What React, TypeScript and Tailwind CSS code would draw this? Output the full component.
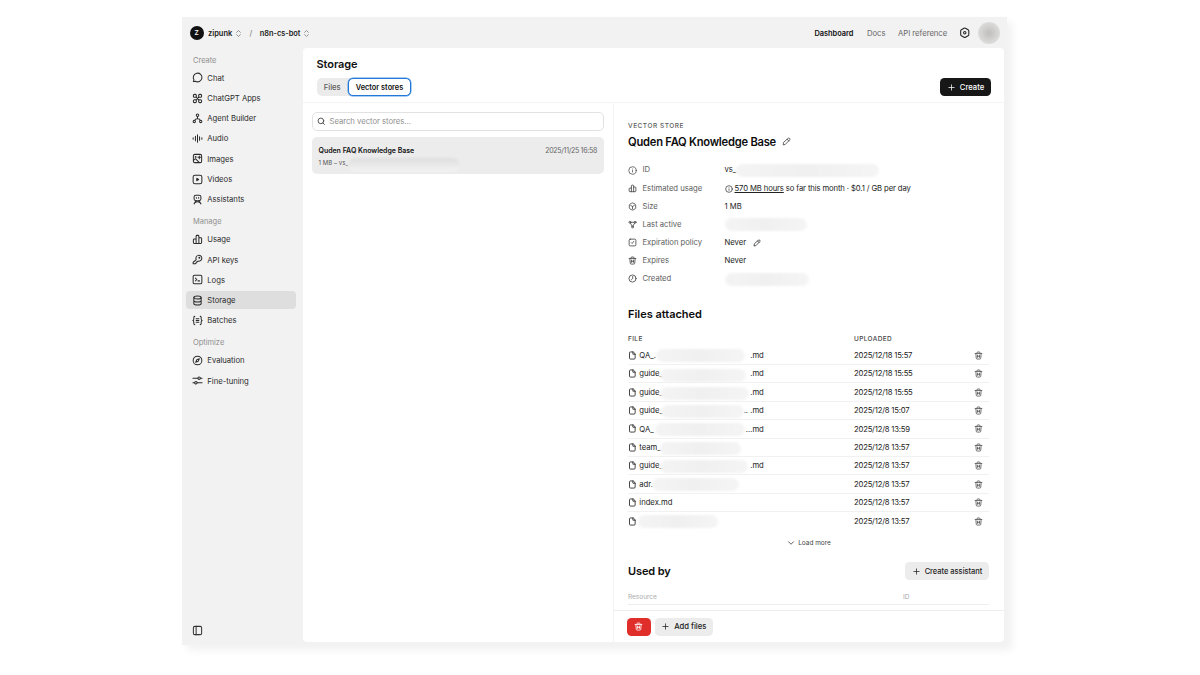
import React, { useState } from 'react';
import { ChevronDown, ChevronsUpDown, Info, Plus, Search } from 'lucide-react';

type IconName = 'chat' | 'apps' | 'agent' | 'audio' | 'images' | 'videos' | 'assistants' | 'usage' | 'key' | 'logs' | 'storage' | 'batches' | 'compass' | 'sliders' | 'sidebar' | 'gear' | 'cube' | 'nodes' | 'policy' | 'trash' | 'file' | 'pencil' | 'clock';

const ICONS: Record<IconName, React.ReactNode> = {
  chat: <path d="M3 21 4.200 17A9.500 9.500 0 1 1 7.500 20.200Z" />,
  apps: <><path d="m9 9 6 6M15 9l-6 6" /><rect x="3" y="3" width="6.5" height="6.5" rx="2.500" /><rect x="14.5" y="3" width="6.5" height="6.5" rx="2.500" /><rect x="3" y="14.5" width="6.5" height="6.5" rx="2.500" /><rect x="14.5" y="14.5" width="6.5" height="6.5" rx="2.500" /></>,
  agent: <><circle cx="12" cy="5" r="2.7" /><circle cx="5" cy="18.5" r="2.5" /><circle cx="19" cy="18.5" r="2.5" /><path d="M12 8v4.500M6 16c.5-2.500 2.500-3.500 6-3.500s5.500 1 6 3.500" /></>,
  audio: <path d="M2.500 10.500v3M7.500 7v10M12 4v16M16.500 8v8M21.500 10.500v3" />,
  images: <><rect x="3" y="3" width="18" height="18" rx="3" /><circle cx="8" cy="8.500" r="1" /><path d="m3.500 16 4-3.500 8 8M16 6.500v6M13 9.500h6" /></>,
  videos: <><rect x="2.500" y="2.500" width="19" height="19" rx="4" /><path d="M10.500 9.500v5l4-2.500Z" fill="currentColor" /></>,
  assistants: <><rect x="4.500" y="2.500" width="15" height="12" rx="4" /><path d="M9.500 7.500v1.500M14.500 7.500v1.500M9 14.500 4.500 21.500M15 14.500l4.500 7M7 18.500c3-2 7-2 10 0" /></>,
  usage: <path d="M9 20.500V5a2 2 0 0 1 2-2h2a2 2 0 0 1 2 2v15.500M9 11H5a2 2 0 0 0-2 2v5.500a2 2 0 0 0 2 2h14a2 2 0 0 0 2-2V10a2 2 0 0 0-2-2h-4" />,
  key: <><path d="M9.300 12.500A6.500 6.500 0 1 1 13 15.500L11 17.500H9V20l-1.500 1.500h-5V18Z" /><circle cx="16" cy="8" r="1" /></>,
  logs: <><rect x="2.500" y="2.500" width="19" height="19" rx="3" /><path d="m7.500 9 3 3-3 3M13 15h3.500" /></>,
  storage: <><ellipse cx="12" cy="5.500" rx="8" ry="3.300" /><path d="M4 5.500v13c0 1.900 3.600 3.500 8 3.500s8-1.600 8-3.500v-13M4 12c0 1.900 3.600 3.500 8 3.500s8-1.600 8-3.500" /></>,
  batches: <path d="M6 3C3.500 3 4 5 4 8s-.5 3.500-2 4c1.500.5 2 1 2 4s-.5 5 2 5M18 3c2.500 0 2 2 2 5s.5 3.500 2 4c-1.500.5-2 1-2 4s.5 5-2 5M9 8h6M9 12h6M9 16h6" />,
  compass: <><circle cx="12" cy="12" r="9.500" /><path d="m16 8-2.500 5.500L8 16l2.500-5.500Z" /></>,
  sliders: <><circle cx="15.500" cy="7" r="2.700" /><circle cx="8.500" cy="17" r="2.700" /><path d="M2 7h10.800M18.200 7H22M2 17h3.800M11.200 17H22" /></>,
  sidebar: <><rect x="3" y="3" width="18" height="18" rx="3" /><path d="M9 3v18" /></>,
  gear: <><path d="M10.500 2.500a3 3 0 0 1 3 0l5.500 3.200a3 3 0 0 1 1.500 2.600v7.400a3 3 0 0 1-1.500 2.600l-5.500 3.200a3 3 0 0 1-3 0L5 18.300a3 3 0 0 1-1.500-2.600V8.300A3 3 0 0 1 5 5.700Z" /><circle cx="12" cy="12" r="2.500" /></>,
  cube: <path d="M10.500 2.800a3 3 0 0 1 3 0l5.500 3a3 3 0 0 1 1.500 2.600v7.200a3 3 0 0 1-1.500 2.600l-5.500 3a3 3 0 0 1-3 0l-5.500-3a3 3 0 0 1-1.500-2.600V8.400A3 3 0 0 1 5 5.800ZM7 9l5 3 5-3M12 12v6" />,
  nodes: <><circle cx="5" cy="6" r="2.500" /><circle cx="19" cy="6" r="2.500" /><circle cx="12" cy="18.500" r="2.500" /><path d="M7.500 6h9M6.500 8.500l4.200 7.500M17.500 8.500 13.300 16" /></>,
  policy: <><rect x="3" y="3" width="18" height="18" rx="3" /><path d="m9 12.500 2 2L15.500 9" /></>,
  trash: <path d="M3 6.500h18M8 6V5a2.500 2.500 0 0 1 2.500-2.500h3A2.500 2.500 0 0 1 16 5v1M5 7l1 12a2.500 2.500 0 0 0 2.500 2.500h7A2.500 2.500 0 0 0 18 19l1-12M9.500 11v6M14.500 11v6M9.500 14h5" />,
  file: <path d="M13 2.500H6.500A2.500 2.500 0 0 0 4 5v14a2.500 2.500 0 0 0 2.500 2.500h10A2.500 2.500 0 0 0 19 19V8.500ZM13 2.500v6h6" />,
  pencil: <path d="m4 15.500-1 5.500 5.500-1L20.300 8.200a3 3 0 0 0-4.500-4.500ZM13.500 6l4.500 4.500" />,
  clock: <><circle cx="12" cy="12" r="9.500" /><path d="M12.500 6.500V12L9 15.500" /></>,
};

const Icon: React.FC<{ name: IconName; className?: string }> = ({ name, className = 'size-[10px]' }) => (
  <svg viewBox="0 0 24 24" fill="none" stroke="currentColor" strokeWidth="2.2" strokeLinecap="round" strokeLinejoin="round" className={`shrink-0 ${className}`}>
    {ICONS[name]}
  </svg>
);

const NAV: { title: string; items: { label: string; icon: IconName }[] }[] = [
  {
    title: 'Create',
    items: [
      { label: 'Chat', icon: 'chat' },
      { label: 'ChatGPT Apps', icon: 'apps' },
      { label: 'Agent Builder', icon: 'agent' },
      { label: 'Audio', icon: 'audio' },
      { label: 'Images', icon: 'images' },
      { label: 'Videos', icon: 'videos' },
      { label: 'Assistants', icon: 'assistants' },
    ],
  },
  {
    title: 'Manage',
    items: [
      { label: 'Usage', icon: 'usage' },
      { label: 'API keys', icon: 'key' },
      { label: 'Logs', icon: 'logs' },
      { label: 'Storage', icon: 'storage' },
      { label: 'Batches', icon: 'batches' },
    ],
  },
  {
    title: 'Optimize',
    items: [
      { label: 'Evaluation', icon: 'compass' },
      { label: 'Fine-tuning', icon: 'sliders' },
    ],
  },
];

// blur = class list of the redaction smudge that covers part of the name
const FILES = [
  { name: 'QA_.', blur: 'left-[28px] top-[2px] w-[89px]', end: '.md', date: '2025/12/18 15:57' },
  { name: 'guide_', blur: 'left-[32px] top-[4px] w-[86px]', end: '.md', date: '2025/12/18 15:55' },
  { name: 'guide_', blur: 'left-[32px] top-[4px] w-[89px]', end: '.md', date: '2025/12/18 15:55' },
  { name: 'guide_', blur: 'left-[33px] top-[3px] w-[83px]', end: '.. .md', date: '2025/12/8 15:07' },
  { name: 'QA_', blur: 'left-[27px] top-[3px] w-[90px]', end: '...md', date: '2025/12/8 13:59' },
  { name: 'team_', blur: 'left-[32px] top-[3px] w-[81px]', end: '', date: '2025/12/8 13:57' },
  { name: 'guide_', blur: 'left-[32px] top-[3px] w-[88px]', end: '.md', date: '2025/12/8 13:57' },
  { name: 'adr.', blur: 'left-[24px] top-[3px] w-[87px]', end: '', date: '2025/12/8 13:57' },
  { name: 'index.md', blur: '', end: '', date: '2025/12/8 13:57' },
  { name: '', blur: 'left-[10px] top-[3px] w-[80px]', end: '', date: '2025/12/8 13:57' },
];

const Smudge: React.FC<{ className: string }> = ({ className }) => (
  <span className={`rounded-full bg-gradient-to-r from-[#f4f4f4] via-[#f0f0f0] to-[#f5f5f5] blur-[1px] ${className}`} />
);

const Row: React.FC<{ icon: React.ReactNode; label: string; children: React.ReactNode }> = ({ icon, label, children }) => (
  <div className="flex h-[18.1px] items-center">
    <span className="flex w-[14.500px] text-[#444]">{icon}</span>
    <span className="w-[82px] whitespace-nowrap pt-[0.8px] text-[#5d5d5d]">{label}</span>
    <div className="flex items-center pt-[0.8px] text-[#222]">{children}</div>
  </div>
);

export default function App() {
  const [activeNav, setActiveNav] = useState('Storage');

  return (
    <div className="h-[675px] w-[1200px] overflow-hidden bg-white pl-[181.5px] pt-[17px] font-['Inter',sans-serif] text-[7.7px] leading-[10px] tracking-[-0.02px] text-[#222]">
      <div className="flex h-[628px] w-[825.5px] flex-col bg-[#f2f2f2] shadow-[5px_5px_8px_rgba(0,0,0,0.06)]">
        <header className="flex h-[31px] shrink-0 items-center pl-[8px] pr-[7px] pt-px">
          <span className="flex size-[14px] items-center justify-center rounded-full bg-[#111] text-[6.5px] font-semibold text-white">Z</span>
          <span className="ml-[4.500px] w-[24px] pt-px text-[7.500px] font-semibold">zipunk</span>
          <ChevronsUpDown className="ml-[2px] size-[9px] text-[#777]" />
          <span className="ml-[6.500px] pt-px text-[#777]">/</span>
          <span className="ml-[7.500px] w-[41px] whitespace-nowrap pt-px text-[7.400px] font-semibold">n8n-cs-bot</span>
          <ChevronsUpDown className="ml-[1.500px] size-[9px] text-[#777]" />
          <nav className="ml-auto flex items-center text-[#666]">
            <span className="w-[52.500px] pt-px text-[7.400px] font-semibold text-[#111]">Dashboard</span>
            <span className="w-[31px] pt-px">Docs</span>
            <span className="w-[60.500px] whitespace-nowrap pt-px">API reference</span>
            <Icon name="gear" className="size-[11.500px] text-[#222]" />
            <span className="ml-[8px] size-[22px] rounded-full bg-[radial-gradient(circle,#c4c2c0_10%,#dcdcdb_70%)] blur-[0.5px]" />
          </nav>
        </header>

        <div className="flex min-h-0 flex-1">
          <aside className="flex w-[121.5px] shrink-0 flex-col">
            {NAV.map((group) => (
              <div key={group.title}>
                <div className="flex h-[19.8px] items-center pl-[11.500px] pt-[5.500px] text-[7.500px] text-[#8f8f8f]">{group.title}</div>
                {group.items.map((item) => (
                  <div key={item.label} className="flex h-[20.25px] items-center pl-[4.500px]">
                    <button
                      onClick={() => setActiveNav(item.label)}
                      className={`flex h-[18px] w-[109.500px] items-center gap-[4.500px] rounded-[4px] pl-[5.800px] text-[#2b2b2b] ${activeNav === item.label ? 'bg-[#dedede]' : ''}`}
                    >
                      <Icon name={item.icon} className="size-[11px]" />
                      <span className="pt-[1.600px]">{item.label}</span>
                    </button>
                  </div>
                ))}
              </div>
            ))}
            <Icon name="sidebar" className="mb-[9.500px] ml-[10px] mt-auto size-[11px] text-[#333]" />
          </aside>

          <main className="mb-[3px] flex w-[701px] flex-col overflow-hidden rounded-[4px] bg-white">
            <div className="h-[55px] shrink-0 border-b border-[#f4f4f4] pl-[13.500px] pr-[13px] pt-[10px]">
              <h1 className="text-[11px] font-semibold leading-[13px] tracking-[-0.080px] text-[#111]">Storage</h1>
              <div className="mt-[7px] flex h-[18px] items-center justify-between">
                <div className="flex h-full w-[94.500px] items-center rounded-[5px] bg-[#ebebeb]">
                  <span className="w-[31.500px] pt-px text-center font-medium text-[#5d5d5d]">Files</span>
                  <span className="flex h-[18px] w-[63px] items-center justify-center whitespace-nowrap rounded-[5px] border border-[#2478d8] bg-white pt-px text-[7.400px] font-semibold text-[#111] shadow-[0_0_0_0.5px_#5a9ce6]">Vector stores</span>
                </div>
                <button className="flex h-full w-[51px] items-center justify-center gap-[4px] rounded-[4.500px] bg-[#171717] font-medium text-white">
                  <Plus className="size-[9px]" /><span className="pt-px">Create</span>
                </button>
              </div>
            </div>

            <div className="flex min-h-0 flex-1">
              <section className="w-[310.500px] shrink-0 border-r border-[#f4f4f4] px-[8.500px] pt-[9px]">
                <div className="flex h-[18.500px] items-center gap-[4px] rounded-[5px] border border-[#e2e2e2] pl-[4.500px] text-[#8f8f8f]">
                  <Search className="size-[8.500px] text-[#444]" strokeWidth={2.500} /><span className="pt-px">Search vector stores...</span>
                </div>
                <div className="relative mt-[6.500px] flex h-[36.500px] flex-col rounded-[5px] bg-[#ececec] px-[7px] pt-[9px]">
                  <div className="flex justify-between">
                    <span className="text-[7px] font-semibold text-[#111]">Quden FAQ Knowledge Base</span>
                    <span className="text-[7px] tracking-[-0.280px] text-[#666]">2025/11/25 16:58</span>
                  </div>
                  <span className="mt-[2px] text-[6px] tracking-[0.060px] text-[#555]">1 MB – vs_</span>
                  <span className="absolute left-[36px] top-[21px] h-[14px] w-[112px] rounded-full bg-gradient-to-b from-[#dedede] to-[#f3f3f3] blur-[1px]" />
                </div>
              </section>

              <section className="flex min-w-0 flex-1 flex-col">
                <div className="min-h-0 flex-1 overflow-hidden pl-[14.500px] pr-[15px]">
                  <div className="mt-[19px] text-[6.500px] font-medium leading-[8px] tracking-[0.520px] text-[#5d5d5d]">VECTOR STORE</div>
                  <div className="mt-[4.500px] flex h-[14px] items-center gap-[6px] whitespace-nowrap text-[11.200px] font-semibold tracking-[-0.240px] text-[#0d0d0d]">
                    <span>Quden FAQ Knowledge Base</span>
                    <Icon name="pencil" className="size-[9px] text-[#444]" />
                  </div>
                  <div className="mt-[12.500px]">
                    <Row icon={<Info className="size-[9px]" />} label="ID">vs_<Smudge className="h-[13px] w-[143px]" /></Row>
                    <Row icon={<Icon name="usage" className="size-[9px]" />} label="Estimated usage">
                      <Info className="mr-[2px] size-[8px]" /><span className="whitespace-nowrap tracking-[-0.120px]"><span className="underline underline-offset-1">570 MB hours</span> so far this month · $0.1 / GB per day</span>
                    </Row>
                    <Row icon={<Icon name="cube" className="size-[9px]" />} label="Size">1 MB</Row>
                    <Row icon={<Icon name="nodes" className="size-[9px]" />} label="Last active"><Smudge className="h-[13px] w-[82px]" /></Row>
                    <Row icon={<Icon name="policy" className="size-[9px]" />} label="Expiration policy"><span className="w-[28px]">Never</span><Icon name="pencil" className="size-[8px]" /></Row>
                    <Row icon={<Icon name="trash" className="size-[9px]" />} label="Expires">Never</Row>
                    <Row icon={<Icon name="clock" className="size-[9px]" />} label="Created"><Smudge className="h-[13px] w-[84px]" /></Row>
                  </div>

                  <h2 className="mt-[20px] text-[11px] font-semibold leading-[13px] text-[#0d0d0d]">Files attached</h2>
                  <div className="mt-[14px] flex h-[8px] items-center text-[6.500px] font-medium tracking-[0.380px] text-[#444]">
                    <span className="w-[226px]">FILE</span><span>UPLOADED</span>
                  </div>
                  <div className="mt-[4px]">
                    {FILES.map((file, i) => (
                      <div key={i} className={`relative flex h-[18.400px] items-center ${i < FILES.length - 1 ? 'border-b border-[#f1f1f1]' : ''}`}>
                        <Icon name="file" className="mr-[2.300px] size-[9px]" />
                        <span className="w-[60px] pt-[1.200px]">{file.name}</span>
                        <span className="w-[64.500px] pt-[1.200px] text-right">{file.end}</span>
                        {file.blur && <Smudge className={`absolute h-[13px] ${file.blur}`} />}
                        <span className="ml-[90.200px] pt-[1.200px] tracking-[-0.190px]">{file.date}</span>
                        <Icon name="trash" className="ml-auto mr-[6.500px] size-[9px] text-[#555]" />
                      </div>
                    ))}
                  </div>
                  <div className="mt-[8.300px] flex h-[8px] items-center justify-center gap-[2px] text-[6.500px] text-[#444]">
                    <ChevronDown className="size-[10px]" />Load more
                  </div>

                  <div className="mt-[15.500px] flex h-[18px] items-center justify-between">
                    <h2 className="text-[11px] font-semibold tracking-[-0.100px] text-[#0d0d0d]">Used by</h2>
                    <button className="flex h-[18px] w-[84px] items-center justify-center gap-[4px] whitespace-nowrap rounded-[4.500px] bg-[#ececec] text-[7.500px] font-medium"><Plus className="size-[9px]" /><span className="pt-px">Create assistant</span></button>
                  </div>
                  <div className="mt-[11px] flex h-[14px] border-b border-[#eeeeee] pt-[1px] text-[6.500px] text-[#aaa]">
                    <span className="w-[275px]">Resource</span><span>ID</span>
                  </div>
                </div>
                <footer className="flex h-[32px] shrink-0 items-center gap-[4.500px] border-t border-[#ededed] pl-[13px]">
                  <button className="flex h-[18px] w-[24px] items-center justify-center rounded-[4.500px] bg-[#e02e2a] text-white"><Icon name="trash" className="size-[9px]" /></button>
                  <button className="flex h-[18px] w-[57.500px] items-center justify-center gap-[4px] whitespace-nowrap rounded-[4.500px] bg-[#ececec] font-medium"><Plus className="size-[9px]" /><span className="pt-px">Add files</span></button>
                </footer>
              </section>
            </div>
          </main>
        </div>
      </div>
    </div>
  );
}
